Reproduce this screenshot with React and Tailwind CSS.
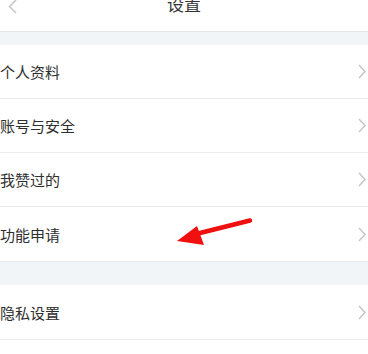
import { Fragment } from 'react';

const groups = [
  ['个人资料', '账号与安全', '我赞过的', '功能申请'],
  ['隐私设置'],
];

function Chevron() {
  return (
    <svg width="8" height="15" viewBox="0 0 8 15" className="shrink-0">
      <path d="M1 1l6 6.5L1 14" fill="none" stroke="#c4c4c8" strokeWidth="1.4" />
    </svg>
  );
}

function Row({ label }) {
  return (
    <div className="h-[54px] flex items-center justify-between pl-0 pr-[2px] bg-white">
      <span className="text-[15px] leading-none text-[#2e2e2e]">{label}</span>
      <Chevron />
    </div>
  );
}

export default function App() {
  return (
    <div
      className="relative w-[368px] h-[354px] overflow-hidden bg-white"
      style={{ fontFamily: '"Noto Sans CJK SC", "Noto Sans", sans-serif' }}
    >
      {/* header */}
      <div className="relative h-[32px] border-b border-[#e6e6e6] flex justify-center">
        <svg width="10" height="16" viewBox="0 0 10 16" className="absolute left-[8px] -top-[1px]">
          <path d="M8 1L1.5 7.5 8 14" fill="none" stroke="#c9c9c9" strokeWidth="1.6" />
        </svg>
        <span className="-mt-[5px] text-[17px] leading-[17px] text-[#333]">设置</span>
      </div>

      {groups.map((g, gi) => (
        <Fragment key={gi}>
          <div className={gi === 0 ? 'h-[13px] bg-[#f2f5f8]' : 'h-[23px] bg-[#f2f5f8]'} />
          <div className="divide-y divide-[#ececec] border-b border-[#ececec]">
            {g.map((label) => (
              <Row key={label} label={label} />
            ))}
          </div>
        </Fragment>
      ))}

      {/* red annotation arrow */}
      <svg
        width="368"
        height="354"
        viewBox="0 0 368 354"
        className="absolute inset-0 pointer-events-none"
      >
        <line x1="250" y1="220.5" x2="196" y2="234" stroke="#f01010" strokeWidth="4.5" strokeLinecap="round" />
        <path d="M177 241 L197 226 L204 245 Z" fill="#f01010" />
      </svg>
    </div>
  );
}
